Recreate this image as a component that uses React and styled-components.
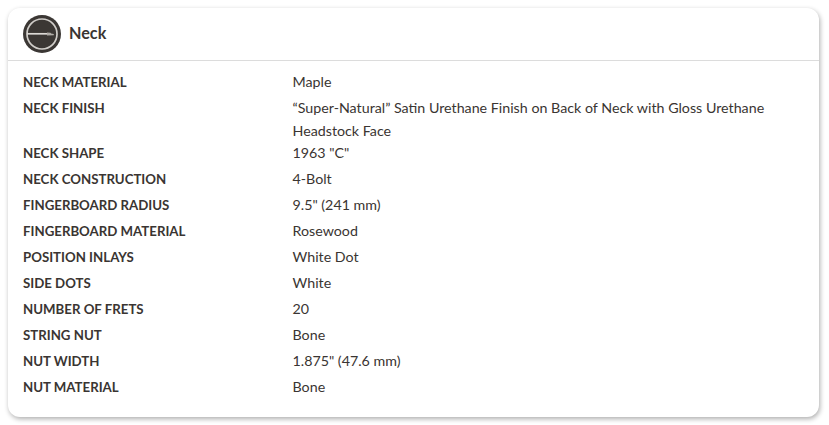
import React from "react";
import styled, { createGlobalStyle } from "styled-components";

const Global = createGlobalStyle`
  html, body { margin: 0; padding: 0; background: #fff; }
  body { font-family: "Lato", "Open Sans", sans-serif; color: #3a3532; }
`;

const Page = styled.div`
  width: 829px;
  height: 425px;
  padding: 8px 10px 8px 8px;
  box-sizing: border-box;
`;

const Card = styled.section`
  height: 409px;
  box-sizing: border-box;
  background: #fff;
  border-radius: 12px;
  box-shadow: 1px 2px 5px rgba(0, 0, 0, 0.32);
`;

const Header = styled.header`
  display: flex;
  align-items: center;
  gap: 8px;
  height: 53px;
  box-sizing: border-box;
  padding: 0 15px 1px;
  border-bottom: 1px solid #dcdcdc;
`;

const Title = styled.h2`
  margin: 0 0 2px;
  font-size: 16.2px;
  font-weight: 700;
  color: #3a3532;
`;

const Specs = styled.dl`
  margin: 0;
  padding: 10px 15px 0;
`;

const Row = styled.div`
  display: grid;
  grid-template-columns: 269.5px 1fr;
  min-height: 26px;
`;

const Label = styled.dt`
  font-size: 13.25px;
  line-height: 22.5px;
  font-weight: 700;
  text-transform: uppercase;
  color: #3a3532;
`;

const Value = styled.dd`
  margin: 0;
  max-width: 490px;
  font-size: 14.25px;
  line-height: 22.5px;
  color: #3a3532;
`;

const NeckIcon = () => (
  <svg width="38" height="38" viewBox="0 0 38 38" aria-hidden="true">
    <circle cx="19" cy="19" r="19" fill="#3b3734" />
    <circle cx="19" cy="19" r="15" fill="none" stroke="#d0cdc9" strokeWidth="1.7" />
    <path d="M4 18.8H24" stroke="#dcd9d5" strokeWidth="1.7" fill="none" />
    <path d="M24 17.6l3.5.2 .6 .7 2.7 .4v1.3l-6.8.2z" fill="#b0aca7" />
  </svg>
);

const specs = [
  ["Neck Material", "Maple"],
  ["Neck Finish", "“Super-Natural” Satin Urethane Finish on Back of Neck with Gloss Urethane Headstock Face"],
  ["Neck Shape", "1963 \"C\""],
  ["Neck Construction", "4-Bolt"],
  ["Fingerboard Radius", "9.5\" (241 mm)"],
  ["Fingerboard Material", "Rosewood"],
  ["Position Inlays", "White Dot"],
  ["Side Dots", "White"],
  ["Number of Frets", "20"],
  ["String Nut", "Bone"],
  ["Nut Width", "1.875\" (47.6 mm)"],
  ["Nut Material", "Bone"],
];

export default function App() {
  return (
    <Page>
      <Global />
      <Card>
        <Header>
          <NeckIcon />
          <Title>Neck</Title>
        </Header>
        <Specs>
          {specs.map(([k, v]) => (
            <Row key={k}>
              <Label>{k}</Label>
              <Value>{v}</Value>
            </Row>
          ))}
        </Specs>
      </Card>
    </Page>
  );
}
